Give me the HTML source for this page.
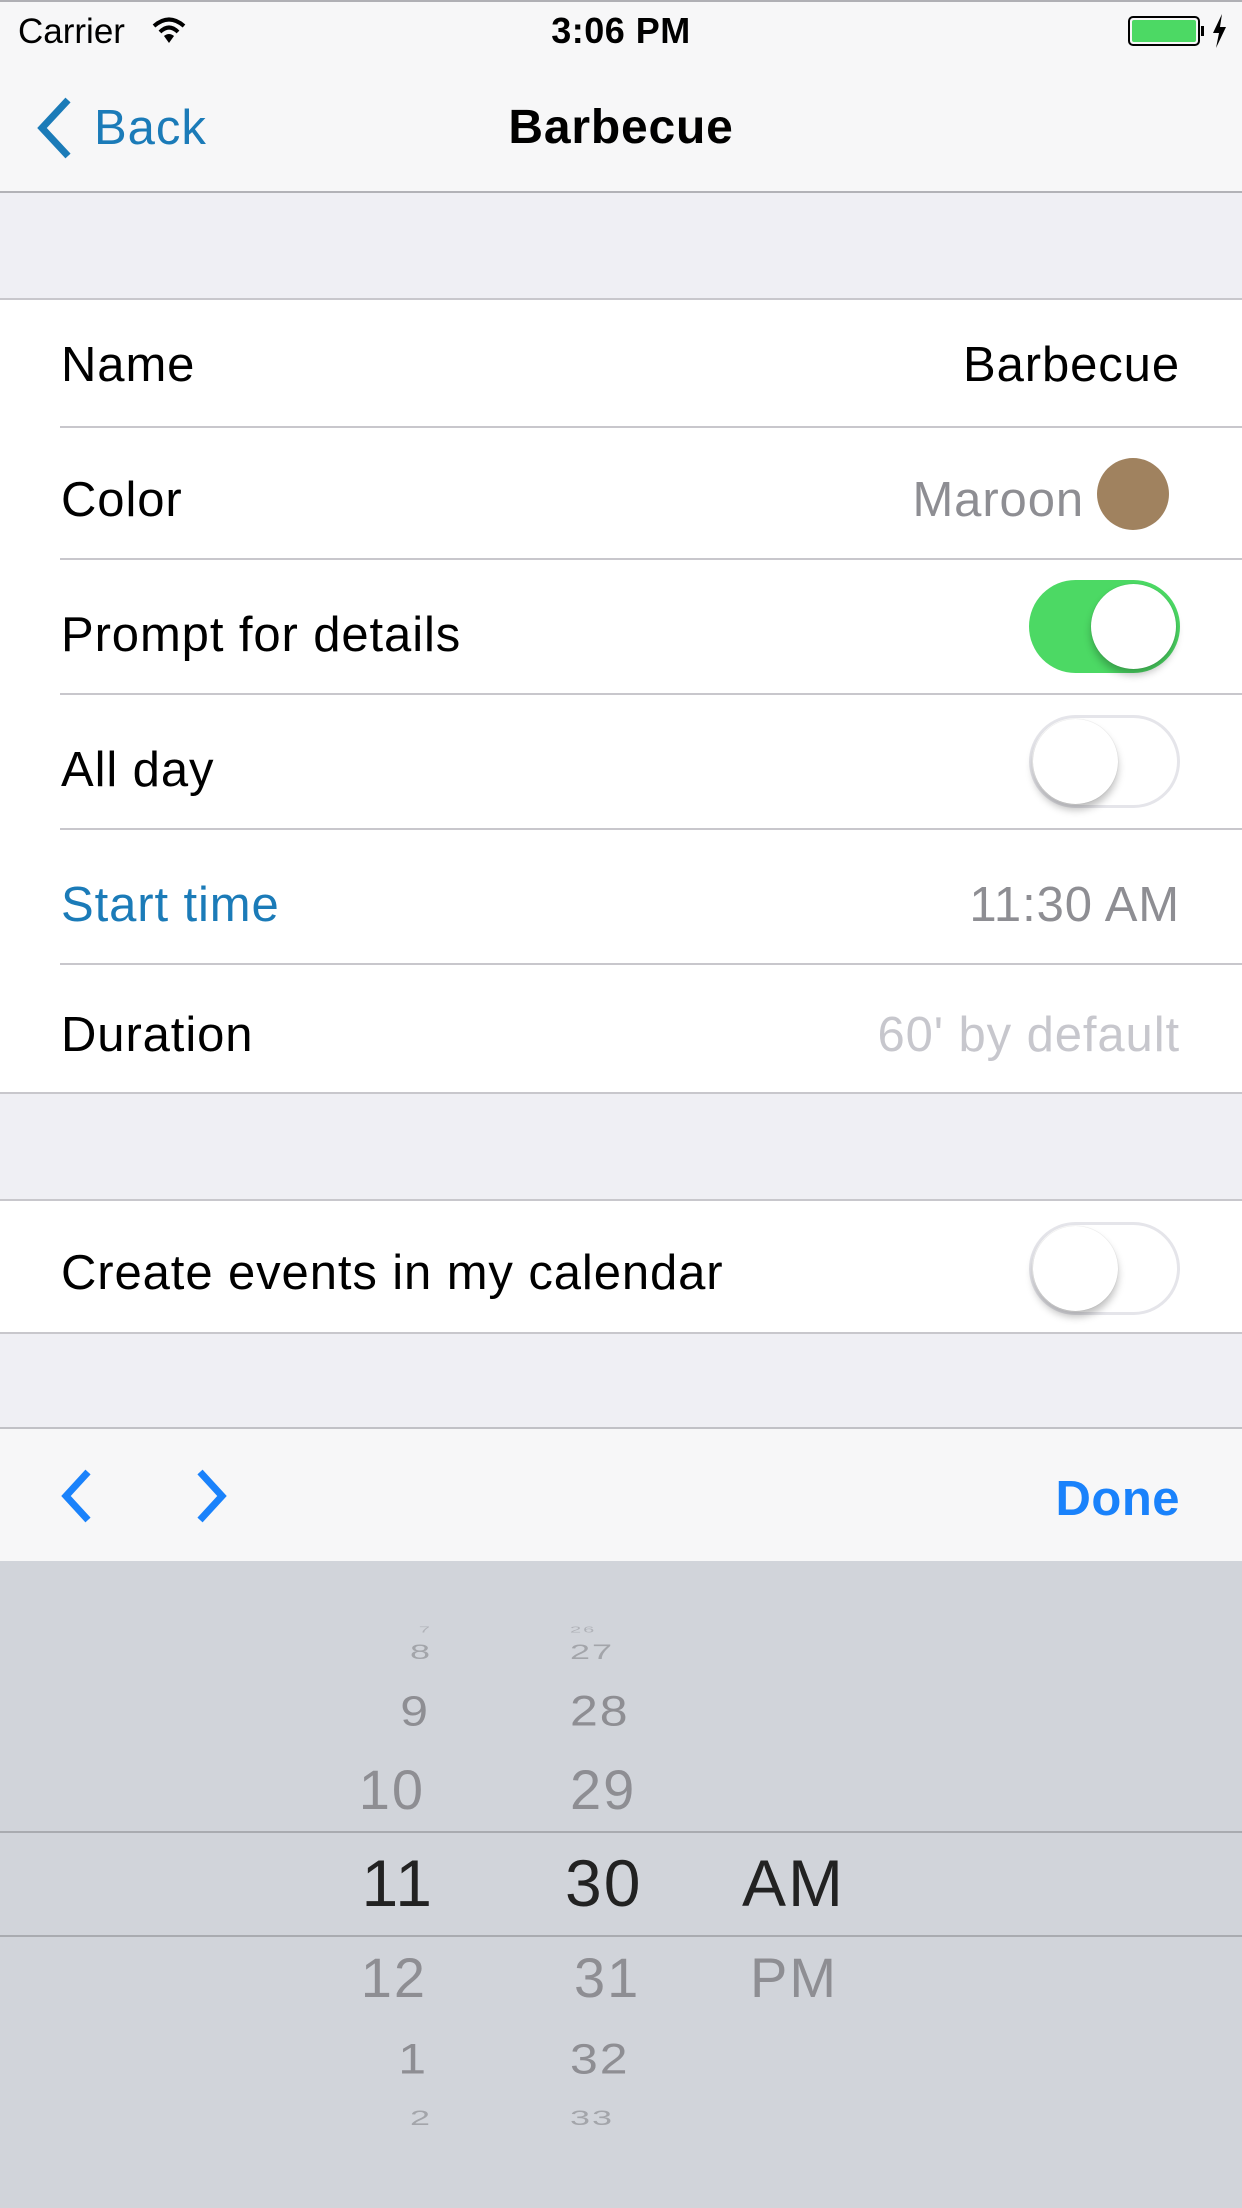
<!DOCTYPE html>
<html><head><meta charset="utf-8"><style>
*{margin:0;padding:0;box-sizing:border-box}
body{width:1242px;height:2208px;overflow:hidden;background:#efeff4;font-family:"Liberation Sans",sans-serif;position:relative}
.abs{position:absolute}
.row{position:absolute;left:0;width:1242px;background:#fff;}
.t{position:absolute;font-size:49px;white-space:nowrap;line-height:1;letter-spacing:0.9px}
.sep{position:absolute;height:2px;background:#c8c7cc}
.sw{position:absolute;width:151px;height:93px;border-radius:47px}
.knob{position:absolute;width:85px;height:85px;border-radius:50%;background:#fff;box-shadow:0 6px 8px rgba(0,0,0,.25),0 0 1px rgba(0,0,0,.2)}
.pk{position:absolute;line-height:1;white-space:nowrap;color:#8e8e93;letter-spacing:2px}
</style></head><body>
<!-- status + nav -->
<div class="abs" style="left:0;top:0;width:1242px;height:193px;background:#f7f7f8;border-top:2px solid #b0b0b5;border-bottom:2px solid #b2b2b7"></div>
<div class="t" style="left:18px;top:14px;font-size:35px;letter-spacing:0">Carrier</div>
<svg class="abs" style="left:152px;top:16px" width="34" height="28" viewBox="0 0 34 28"><path d="M2 10 Q17 -3 32 10" fill="none" stroke="#000" stroke-width="4"/><path d="M8 16 Q17 7 26 16" fill="none" stroke="#000" stroke-width="4"/><path d="M12 20 L17 27 L22 20 Q17 16 12 20Z" fill="#000"/></svg>
<div class="t" style="left:0;width:1242px;text-align:center;top:13px;font-size:36px;font-weight:bold;letter-spacing:0.5px">3:06 PM</div>
<div class="abs" style="left:1128px;top:16px;width:72px;height:30px;border:2px solid #000;border-radius:5px;padding:2px"><div style="width:100%;height:100%;background:#4cd964;border-radius:2px"></div></div>
<div class="abs" style="left:1201px;top:26px;width:3px;height:10px;background:#000"></div>
<svg class="abs" style="left:1210px;top:14px" width="18" height="34" viewBox="0 0 18 34"><path d="M12 0 L3 19 L9 19 L6 34 L16 13 L10 13Z" fill="#000"/></svg>
<svg class="abs" style="left:34px;top:96px" width="40" height="64" viewBox="0 0 40 64"><path d="M34 4 L8 32 L34 60" fill="none" stroke="#1b7bb8" stroke-width="7"/></svg>
<div class="t" style="left:94px;top:104px;font-size:49px;color:#1b7bb8;letter-spacing:1px">Back</div>
<div class="t" style="left:0;width:1242px;text-align:center;top:104px;font-size:48px;font-weight:bold;letter-spacing:0.8px">Barbecue</div>

<!-- section 1 -->
<div class="row" style="top:298px;height:796px;border-top:2px solid #c8c7cc;border-bottom:2px solid #c8c7cc"></div>
<div class="sep" style="left:60px;width:1182px;top:426px"></div>
<div class="sep" style="left:60px;width:1182px;top:558px"></div>
<div class="sep" style="left:60px;width:1182px;top:693px"></div>
<div class="sep" style="left:60px;width:1182px;top:828px"></div>
<div class="sep" style="left:60px;width:1182px;top:963px"></div>

<div class="t" style="left:61px;top:341px">Name</div>
<div class="t" style="right:62px;top:341px">Barbecue</div>
<div class="t" style="left:61px;top:476px">Color</div>
<div class="t" style="right:158px;top:476px;color:#8e8e93">Maroon</div>
<div class="abs" style="left:1097px;top:458px;width:72px;height:72px;border-radius:50%;background:#a0825f"></div>
<div class="t" style="left:61px;top:611px">Prompt for details</div>
<div class="sw" style="left:1029px;top:580px;background:#4cd964"></div>
<div class="knob" style="left:1091px;top:584px"></div>
<div class="t" style="left:61px;top:746px">All day</div>
<div class="sw" style="left:1029px;top:715px;border:3px solid #e5e5ea;background:#fff"></div>
<div class="knob" style="left:1033px;top:719px"></div>
<div class="t" style="left:61px;top:881px;color:#1b7bb8">Start time</div>
<div class="t" style="right:62px;top:881px;color:#8e8e93">11:30 AM</div>
<div class="t" style="left:61px;top:1011px">Duration</div>
<div class="t" style="right:62px;top:1011px;color:#c7c7cd">60' by default</div>

<!-- section 2 -->
<div class="row" style="top:1199px;height:135px;border-top:2px solid #c8c7cc;border-bottom:2px solid #c8c7cc"></div>
<div class="t" style="left:61px;top:1249px">Create events in my calendar</div>
<div class="sw" style="left:1029px;top:1222px;border:3px solid #e5e5ea;background:#fff"></div>
<div class="knob" style="left:1033px;top:1226px"></div>

<!-- toolbar -->
<div class="abs" style="left:0;top:1427px;width:1242px;height:134px;background:#f7f7f8;border-top:2px solid #c1c1c6"></div>
<svg class="abs" style="left:56px;top:1468px" width="40" height="56" viewBox="0 0 40 56"><path d="M32 4 L10 28 L32 52" fill="none" stroke="#1a82fb" stroke-width="7"/></svg>
<svg class="abs" style="left:192px;top:1468px" width="40" height="56" viewBox="0 0 40 56"><path d="M8 4 L30 28 L8 52" fill="none" stroke="#1a82fb" stroke-width="7"/></svg>
<div class="t" style="right:62px;top:1475px;font-weight:bold;color:#1a82fb;letter-spacing:0.5px">Done</div>

<!-- picker -->
<div class="abs" style="left:0;top:1561px;width:1242px;height:647px;background:#d1d4da"></div>
<div class="sep" style="left:0;width:1242px;top:1831px;background:#a9abb0"></div>
<div class="sep" style="left:0;width:1242px;top:1935px;background:#a9abb0"></div>

<div class="pk" style="right:810px;top:1620px;font-size:20px;color:#b0b2b8;transform:scaleY(.4)">7</div>
<div class="pk" style="right:810px;top:1634px;font-size:36px;color:#a3a5aa;transform:scaleY(.6)">8</div>
<div class="pk" style="right:812px;top:1686px;font-size:50px;transform:scaleY(.85)">9</div>
<div class="pk" style="right:817px;top:1762px;font-size:56px">10</div>
<div class="pk" style="right:808px;top:1850px;font-size:66px;color:#222">11</div>
<div class="pk" style="right:815px;top:1950px;font-size:56px">12</div>
<div class="pk" style="right:814px;top:2034px;font-size:50px;transform:scaleY(.85)">1</div>
<div class="pk" style="right:810px;top:2100px;font-size:36px;color:#a3a5aa;transform:scaleY(.6)">2</div>

<div class="pk" style="left:570px;top:1620px;font-size:20px;color:#b0b2b8;transform:scaleY(.4)">26</div>
<div class="pk" style="left:570px;top:1634px;font-size:36px;color:#a3a5aa;transform:scaleY(.6)">27</div>
<div class="pk" style="left:570px;top:1686px;font-size:50px;transform:scaleY(.85)">28</div>
<div class="pk" style="left:570px;top:1762px;font-size:56px">29</div>
<div class="pk" style="left:565px;top:1850px;font-size:66px;color:#222">30</div>
<div class="pk" style="left:574px;top:1950px;font-size:56px">31</div>
<div class="pk" style="left:570px;top:2034px;font-size:50px;transform:scaleY(.85)">32</div>
<div class="pk" style="left:570px;top:2100px;font-size:36px;color:#a3a5aa;transform:scaleY(.6)">33</div>

<div class="pk" style="left:742px;top:1850px;font-size:66px;color:#222">AM</div>
<div class="pk" style="left:750px;top:1950px;font-size:56px">PM</div>
</body></html>
